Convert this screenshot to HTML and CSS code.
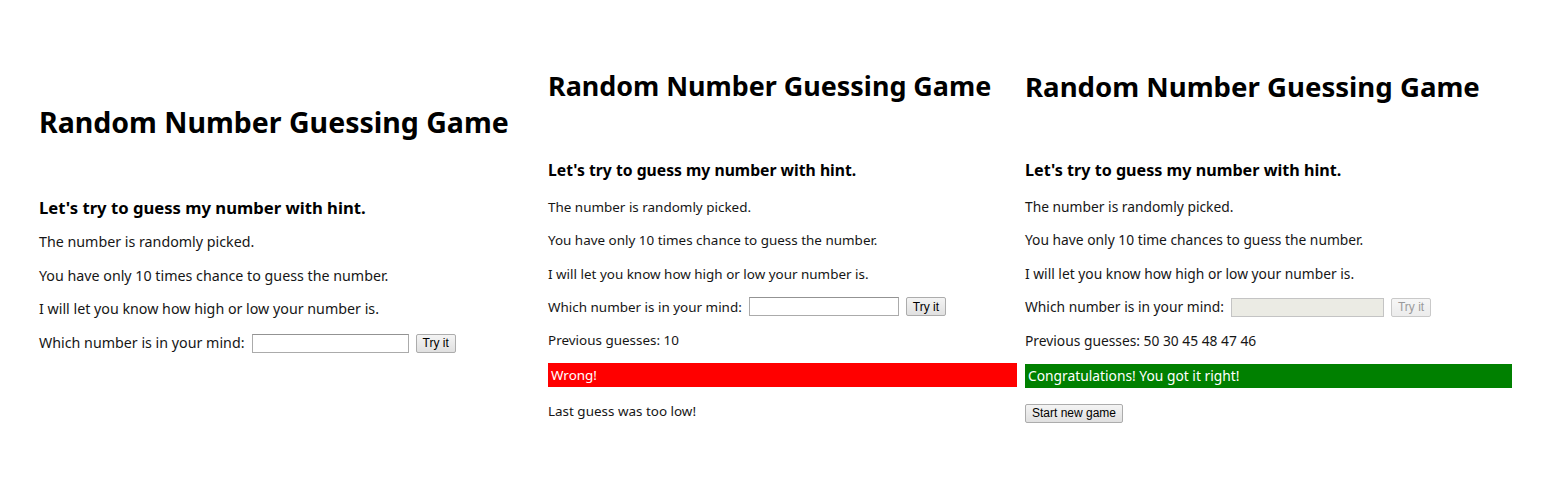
FILE: index.html
```html
<!DOCTYPE html>
<html lang="en">
<head>
<meta charset="utf-8">
<title>Random Number Guessing Game</title>
<link rel="stylesheet" href="styles.css">
</head>
<body>
<main class="shots">
  <section class="game game-1">
    <h1 class="title">Random Number Guessing Game</h1>
    <h3 class="subtitle">Let's try to guess my number with hint.</h3>
    <p class="line">The number is randomly picked.</p>
    <p class="line">You have only 10 times chance to guess the number.</p>
    <p class="line">I will let you know how high or low your number is.</p>
    <div class="line form-row">
      <label class="field-label" for="g1">Which number is in your mind:</label>
      <input class="guess-field" id="g1" type="text">
      <button class="btn" type="button">Try it</button>
    </div>
  </section>

  <section class="game game-2">
    <h1 class="title">Random Number Guessing Game</h1>
    <h3 class="subtitle">Let's try to guess my number with hint.</h3>
    <p class="line">The number is randomly picked.</p>
    <p class="line">You have only 10 times chance to guess the number.</p>
    <p class="line">I will let you know how high or low your number is.</p>
    <div class="line form-row">
      <label class="field-label" for="g2">Which number is in your mind:</label>
      <input class="guess-field" id="g2" type="text">
      <button class="btn" type="button">Try it</button>
    </div>
    <p class="line">Previous guesses: 10</p>
    <p class="result result-wrong">Wrong!</p>
    <p class="line hint">Last guess was too low!</p>
  </section>

  <section class="game game-3">
    <h1 class="title">Random Number Guessing Game</h1>
    <h3 class="subtitle">Let's try to guess my number with hint.</h3>
    <p class="line">The number is randomly picked.</p>
    <p class="line">You have only 10 time chances to guess the number.</p>
    <p class="line">I will let you know how high or low your number is.</p>
    <div class="line form-row">
      <label class="field-label" for="g3">Which number is in your mind:</label>
      <input class="guess-field" id="g3" type="text" disabled>
      <button class="btn" type="button" disabled>Try it</button>
    </div>
    <p class="line">Previous guesses: 50 30 45 48 47 46</p>
    <p class="result result-right">Congratulations! You got it right!</p>
    <div class="restart-row">
      <button class="btn btn-restart" type="button">Start new game</button>
    </div>
  </section>
</main>
</body>
</html>
```

FILE: styles.css
```css
html, body {
  margin: 0;
  padding: 0;
  background: #ffffff;
}

body {
  font-family: "Noto Sans", "Open Sans", "Liberation Sans", sans-serif;
  color: #161616;
}

.shots {
  display: flex;
  align-items: flex-start;
  padding-left: 39px;
}

.game {
  flex: none;
  --gap: 13.7px;
  --first-gap: 13.5px;
  --h3-gap: 53.5px;
  --input-w: 157px;
  --bar-gap: 13px;
  --after-bar: 14px;
}

.game-1 {
  width: 470px;
  margin-right: 39px;
  padding-top: 102px;
  font-size: 14.25px;
}

.game-2 {
  width: 469px;
  margin-right: 8px;
  padding-top: 66px;
  font-size: 13.45px;
  --gap: 13.3px;
  --first-gap: 15.5px;
  --h3-gap: 52.5px;
  --input-w: 150px;
}

.game-3 {
  width: 487px;
  padding-top: 66px;
  font-size: 13.8px;
  --gap: 13.4px;
  --first-gap: 15.5px;
  --h3-gap: 52.5px;
  --input-w: 153px;
  --after-bar: 16px;
}

.title {
  font-size: 2em;
  font-weight: 700;
  line-height: 40px;
  margin: 0;
  color: #000;
  white-space: nowrap;
}

.subtitle {
  font-size: 1.17em;
  font-weight: 700;
  line-height: 23px;
  margin: var(--h3-gap) 0 0;
  color: #000;
}

.line {
  margin: var(--gap) 0 0;
  line-height: 20px;
  white-space: nowrap;
}

.subtitle + .line {
  margin-top: var(--first-gap);
}

.form-row {
  display: flex;
  align-items: center;
  height: 20px;
}

.field-label {
  margin-right: 7px;
}

.guess-field {
  box-sizing: border-box;
  width: var(--input-w);
  height: 19px;
  margin: 0 7px 0 0;
  padding: 0 2px;
  border: 1px solid #ababab;
  border-top-color: #939393;
  background: #fff;
  font: inherit;
}

.guess-field:disabled {
  background: #ebebe4;
  border-color: #c4c4c4;
}

.btn {
  box-sizing: border-box;
  height: 19px;
  padding: 0 6px;
  border: 1px solid #acacac;
  border-radius: 2px;
  background: linear-gradient(#f4f4f4, #e0e0e0);
  font-family: "Liberation Sans", Arial, sans-serif;
  font-size: 12px;
  line-height: 1;
  color: #000;
}

.btn:disabled {
  color: #9a9a9a;
  border-color: #c9c9c9;
  background: linear-gradient(#f6f6f6, #ececec);
}

.result {
  margin: var(--bar-gap) 0 0;
  padding: 2px 3px;
  line-height: 20px;
  color: #fff;
  white-space: nowrap;
}

.result-wrong {
  background: #ff0000;
}

.result-right {
  background: #008000;
}

.result + .line {
  margin-top: var(--after-bar);
}

.restart-row {
  display: flex;
  margin-top: var(--after-bar);
}

.btn-restart {
  padding: 0 6px;
}
```
